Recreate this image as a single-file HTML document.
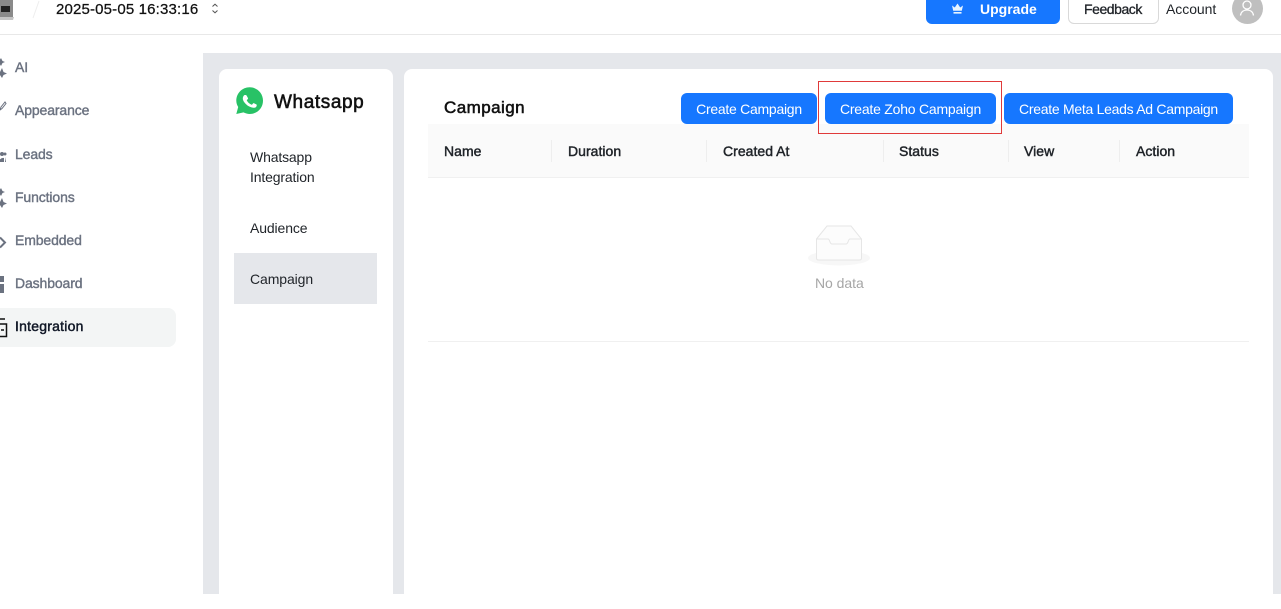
<!DOCTYPE html>
<html><head><meta charset="utf-8"><style>
*{box-sizing:border-box}
html,body{margin:0;padding:0;width:1281px;height:594px;overflow:hidden;background:#fff;font-family:"Liberation Sans","Noto Sans CJK SC",sans-serif;font-size:14px;color:#111827}
.a{position:absolute;white-space:nowrap;line-height:20px}
.nav{color:#6b7280;left:15px;font-size:14px;-webkit-text-stroke:.4px #6b7280;letter-spacing:-.12px}
.btn{position:absolute;top:93px;height:31px;background:#1677ff;border-radius:6px;color:#fff;text-align:center;line-height:33px;font-size:14px;white-space:nowrap}
.th{top:141px;font-size:14px;color:#1f2328;-webkit-text-stroke:.45px #1f2328;letter-spacing:.03px}
.sep{position:absolute;top:140px;width:1px;height:22px;background:#eee}
</style></head><body>
<div class="a" style="left:0;top:34px;width:1281px;height:1px;background:#e8e8e8"></div>
<svg class="a" style="left:0;top:0" width="18" height="22" viewBox="0 0 18 22"><rect x="-2" y="0" width="15" height="17" fill="#8a8a8a"/><rect x="1" y="6" width="9" height="6" fill="#222"/><path d="M-2 17H14L13 20H-2Z" fill="#c4c4c4"/></svg>
<svg class="a" style="left:30px;top:0" width="12" height="20"><path d="M9 1L3 18" stroke="#eee" stroke-width="1"/></svg>
<div class="a" style="left:56px;top:0;font-size:15px;color:#111;letter-spacing:.16px;-webkit-text-stroke:.25px #111">2025-05-05 16:33:16</div>
<svg class="a" style="left:211px;top:3px" width="8" height="11" viewBox="0 0 8 11"><path d="M1.500 3.500L4 1.200L6.500 3.500M1.500 7.500L4 9.800L6.500 7.500" fill="none" stroke="#555" stroke-width="1"/></svg>

<div class="a" style="left:926px;top:-8px;width:134px;height:32px;background:#1677ff;border-radius:6px"></div>
<svg class="a" style="left:951px;top:3px" width="13" height="11" viewBox="0 0 13 11"><path d="M1 2.500L3.800 4.500L6.500 .5L9.200 4.500L12 2.500L10.800 7.800H2.200Z M2.500 9H10.500V10.600H2.500Z" fill="#e6f4ff"/></svg>
<div class="a" style="left:980px;top:-1px;color:#fff;font-weight:700;font-size:14px">Upgrade</div>
<div class="a" style="left:1068px;top:-8px;width:91px;height:32px;background:#fff;border:1px solid #d9d9d9;border-radius:6px"></div>
<div class="a" style="left:1084px;top:-1px;font-size:14px;color:#1f2328;letter-spacing:-.45px;-webkit-text-stroke:.3px #1f2328">Feedback</div>
<div class="a" style="left:1166px;top:-1px;font-size:14px;color:#1f2328;letter-spacing:-.05px">Account</div>
<div class="a" style="left:1232px;top:-7px;width:31px;height:31px;border-radius:50%;background:#bfbfbf"></div>
<svg class="a" style="left:1238px;top:0" width="18" height="18" viewBox="0 0 18 18"><circle cx="9" cy="5" r="4" fill="none" stroke="#fff" stroke-width="1.300"/><path d="M2.500 15.500C3 11.500 6 10 9 10S15 11.500 15.500 15.500" fill="none" stroke="#fff" stroke-width="1.300"/></svg>

<div class="a" style="left:-10px;top:308px;width:186px;height:39px;background:#f3f5f5;border-radius:8px"></div>
<div class="a nav" style="top:57px">AI</div>
<div class="a nav" style="top:100px">Appearance</div>
<div class="a nav" style="top:144px">Leads</div>
<div class="a nav" style="top:187px">Functions</div>
<div class="a nav" style="top:230px">Embedded</div>
<div class="a nav" style="top:273px">Dashboard</div>
<div class="a nav" style="top:316px;color:#111827;-webkit-text-stroke:.45px #111827;letter-spacing:.22px">Integration</div>
<svg class="a" style="left:0;top:55px" width="8" height="285" viewBox="0 0 8 285" fill="#6b7280">
<path d="M1 3L2.500 6L5 7L2.500 8L1 11L-1 8L-3 7L-1 6Z M2 13L3.500 17L7 18.500L3.500 20L2 23L0 20L-3 18.500L0 17Z"/>
<path d="M0 55L1 52L5 47L6 48.500L2 53.500Z" fill="none" stroke="#6b7280"/>
<circle cx="2" cy="99" r="2"/><circle cx="5" cy="99" r="1.500"/><path d="M-2 107Q1 102 4 103V107H-2Z"/><path d="M5 102L6 107H5Z"/>
<path d="M1 133L2.500 136L5 137L2.500 138L1 141L-1 138L-3 137L-1 136Z M2 143L3.500 147L7 148.500L3.500 150L2 153L0 150L-3 148.500L0 147Z"/>
<path d="M0 182.500L5 187.500L0 192.500" fill="none" stroke="#6b7280" stroke-width="2"/>
<path d="M0 221H4V227H0Z M0 229H4V238H0Z"/>
<path d="M0 264H5M-1 269H6.500V281.500H-1Z M1 275H4" fill="none" stroke="#111" stroke-width="1.500"/>
</svg>

<div class="a" style="left:203px;top:53px;width:1078px;height:541px;background:#e5e7eb"></div>
<div class="a" style="left:219px;top:69px;width:174px;height:540px;background:#fff;border-radius:8px"></div>
<div class="a" style="left:404px;top:69px;width:869px;height:540px;background:#fff;border-radius:8px"></div>

<svg class="a" style="left:236px;top:87px" width="28" height="28" viewBox="0 0 28 28"><path d="M.3 27L2.200 20C1 18 .3 16 .3 13.700C.3 6.300 6.300 .3 13.700 .3S27 6.300 27 13.700S21 27 13.700 27C11.500 27 9.400 26.400 7.500 25.400Z" fill="#28c266"/><path d="M10.700 8.800C10.300 8 10 8 9.500 8H9C8.700 8 8.300 8.100 7.900 8.500C7.500 9 6.800 10 6.800 11.500S7.900 14.700 8.100 15C8.300 15.200 10.500 18.500 14.100 19.900C17 21 17.700 20.800 18.400 20.800C19.100 20.700 20.300 20 20.500 19.200C20.800 18.400 20.800 17.800 20.700 17.700C20.600 17.500 20.400 17.400 20 17.200L18 16.200C17.600 16 17.400 16 17.100 16.400L16.200 17.500C16 17.800 15.800 17.800 15.400 17.600C15 17.400 14 17 12.800 16C11.800 15 11.200 14.100 10.900 13.700C10.700 13.300 10.900 13.100 11.100 12.900L11.900 11.900C12.100 11.600 12.100 11.400 12 11.100Z" fill="#fff"/></svg>
<div class="a" style="left:274px;top:91px;font-size:19px;line-height:24px;color:#111;-webkit-text-stroke:.55px #111;letter-spacing:.6px">Whatsapp</div>
<div class="a" style="left:250px;top:147px;color:#1f2328;letter-spacing:-.15px">Whatsapp<br>Integration</div>
<div class="a" style="left:250px;top:218px;color:#1f2328;letter-spacing:-.12px">Audience</div>
<div class="a" style="left:234px;top:253px;width:143px;height:51px;background:#e5e7eb"></div>
<div class="a" style="left:250px;top:269px;color:#1f2328;letter-spacing:-.1px">Campaign</div>

<div class="a" style="left:444px;top:96px;font-size:17px;line-height:24px;color:#111;-webkit-text-stroke:.55px #111;letter-spacing:.45px">Campaign</div>
<div class="a" style="left:428px;top:124px;width:821px;height:54px;background:#fafafa;border-bottom:1px solid #f0f0f0"></div>
<div class="btn" style="left:681px;width:136px;letter-spacing:-.27px">Create Campaign</div>
<div class="btn" style="left:825px;width:171px;letter-spacing:-.22px">Create Zoho Campaign</div>
<div class="btn" style="left:1004px;width:229px;letter-spacing:-.28px">Create Meta Leads Ad Campaign</div>
<div class="a" style="left:818px;top:81px;width:184px;height:53px;border:1px solid #e03a3a"></div>

<div class="a th" style="left:444px">Name</div>
<div class="a th" style="left:568px">Duration</div>
<div class="a th" style="left:723px">Created At</div>
<div class="a th" style="left:899px">Status</div>
<div class="a th" style="left:1024px">View</div>
<div class="a th" style="left:1136px">Action</div>
<div class="sep" style="left:551px"></div>
<div class="sep" style="left:706px"></div>
<div class="sep" style="left:883px"></div>
<div class="sep" style="left:1008px"></div>
<div class="sep" style="left:1119px"></div>

<svg class="a" style="left:807px;top:224px" width="64" height="44" viewBox="0 0 64 44"><ellipse cx="32" cy="34" rx="31" ry="7.500" fill="#f7f7f7"/><path d="M9.500 15L20 2H44L54.500 15V34Q54.500 36 52.500 36H11.500Q9.500 36 9.500 34Z" fill="#fcfcfc" stroke="#e6e6e6"/><path d="M9.500 15H21C23 15 22.500 20 25 20H39C41.500 20 41 15 43 15H54.500" fill="none" stroke="#e6e6e6"/></svg>
<div class="a" style="left:815px;top:273px;color:#a6a6a6;font-size:14px;letter-spacing:-.05px">No data</div>
<div class="a" style="left:428px;top:341px;width:821px;height:1px;background:#f0f0f0"></div>
</body></html>
